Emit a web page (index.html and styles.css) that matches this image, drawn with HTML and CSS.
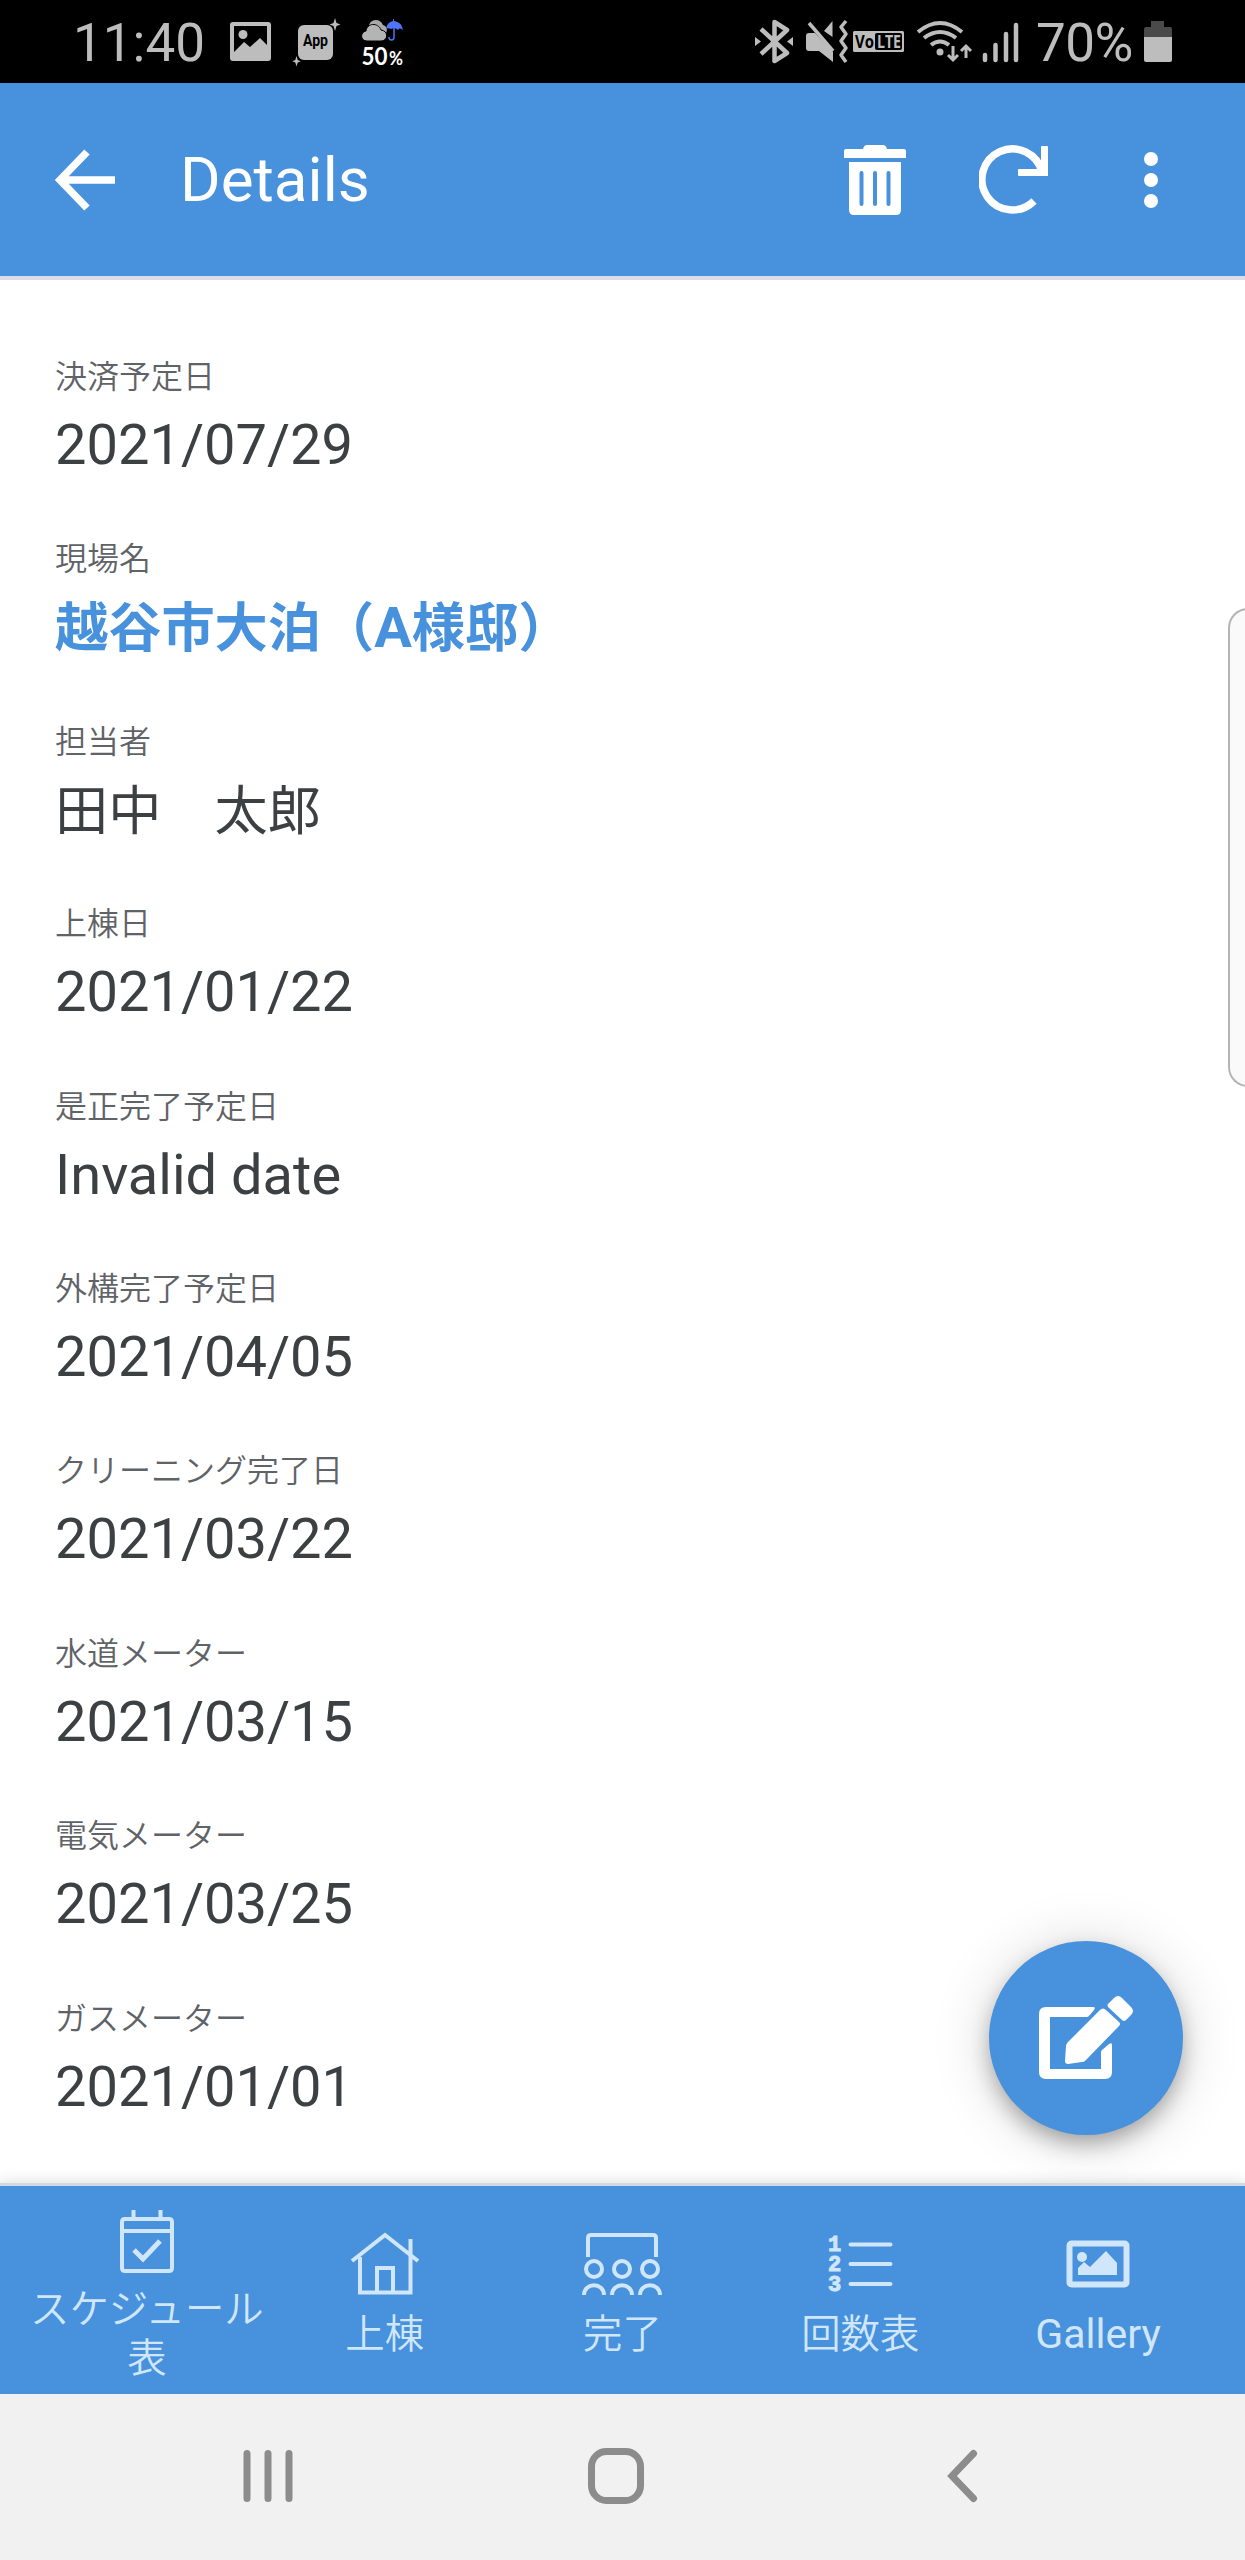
FILE: index.html
```html
<!DOCTYPE html>
<html lang="ja">
<head>
    <meta charset="UTF-8">
    <meta name="viewport" content="width=device-width, initial-scale=1.0">
    <title>Details</title>
    <link rel="stylesheet" href="styles.css">
</head>
<body>
    <div class="status-bar">
        <span class="clock">11:40</span>
        <svg class="status-left" width="180" height="83" viewBox="226 0 180 83">
            <!-- picture -->
            <path fill="#bdbdbd" fill-rule="evenodd" d="M233 22h35a3 3 0 0 1 3 3v33a3 3 0 0 1-3 3h-35a3 3 0 0 1-3-3V25a3 3 0 0 1 3-3zM234 26v26l10-10 6 5 10-9 7 7V26z"/>
            <circle cx="243" cy="34.500" r="4.500" fill="#bdbdbd"/>
            <!-- app -->
            <rect x="298" y="25" width="35" height="35" rx="6" fill="#bdbdbd"/>
            <text class="app-text" x="303" y="46" textLength="25" lengthAdjust="spacingAndGlyphs">App</text>
            <path fill="#bdbdbd" d="M335 18l1.500 5 4 1.500-4 1.500-1.500 5-1.500-5-4-1.500 4-1.500zM296.500 56l1.200 4 3 1.200-3 1.200-1.200 4-1.200-4-3-1.200 3-1.200z"/>
            <!-- weather -->
            <path fill="#a8a8a8" d="M369 25c2-6 11-7 14 0 5 1 5 8 1 10l-14-7z"/>
            <path fill="#b4b4b4" stroke="#000" stroke-width="1" d="M367 41c-7 0-7-9-1-10 1-8 12-9 15-1 8 1 7 11 0 11z"/>
            <path fill="#4f74f5" d="M386 29c1-5 3-7 7-8v-2h1v2c6 1 8 4 9 9-2-2-4-2-5 0-2-2-5-2-7-1-2-1-4-1-5 0z"/>
            <path fill="none" stroke="#4f74f5" stroke-width="1.500" d="M394 28v9c0 4-5 4-5 0"/>
            <text class="rain-text" x="361.500" y="64.500" textLength="26" lengthAdjust="spacingAndGlyphs">50</text>
            <text class="rain-percent" x="389" y="64.500" textLength="14" lengthAdjust="spacingAndGlyphs">%</text>
        </svg>
        <svg class="status-right" width="270" height="83" viewBox="752 0 270 83">
            <!-- bluetooth -->
            <path fill="none" stroke="#bdbdbd" stroke-width="4.500" stroke-linejoin="round" d="M761 29l26 24-12.500 8V22l12.500 8-26 24"/>
            <path fill="#bdbdbd" d="M755 37l6 4.500-6 4.500zM793 37l-6 4.500 6 4.500z"/>
            <!-- muted, vibrating -->
            <path fill="#bdbdbd" d="M806 36q0-3 3-3h6l18 19v10l-14-11h-10q-3 0-3-3zM824 31l8.500-10v16z"/>
            <path fill="none" stroke="#bdbdbd" stroke-width="3.500" d="M809 23l24 28"/>
            <path fill="none" stroke="#bdbdbd" stroke-width="3.500" stroke-linejoin="round" d="M846 21l-5 6 5 7-5 7 5 7-5 7 5 7"/>
            <!-- volte -->
            <rect x="853" y="31" width="51" height="21" rx="1.500" fill="#bdbdbd"/>
            <rect x="875" y="33" width="27" height="17" rx="2" fill="#000"/>
            <text class="volte-text" x="855" y="47.500" textLength="19" lengthAdjust="spacingAndGlyphs">Vo</text>
            <text class="volte-text light" x="877" y="47.500" textLength="24" lengthAdjust="spacingAndGlyphs">LTE</text>
            <!-- wifi -->
            <g fill="none" stroke="#bdbdbd" stroke-width="4">
                <path d="M918 32q22-18 44 0M924 38q16-12 32 0M931 45q9-7 18 0"/>
            </g>
            <circle cx="940" cy="52" r="3.500" fill="#bdbdbd"/>
            <path fill="none" stroke="#bdbdbd" stroke-width="3" d="M953 46v14M948 55l5 5 5-5M966 58V46M961 51l5-5 5 5"/>
            <!-- signal -->
            <path stroke="#bdbdbd" stroke-width="4.500" stroke-linecap="round" d="M985 55v5M995.500 45v15M1006 34v26M1016 25v35"/>
        </svg>
        <span class="battery-level">70%</span>
        <svg class="battery" width="28" height="41" viewBox="0 0 28 41">
            <path fill="#4a4a4a" d="M0 16V8q0-2 2-2h5V0h13v6h6q2 0 2 2v8z"/>
            <path fill="#bdbdbd" d="M0 16h28v23q0 2-2 2H2q-2 0-2-2z"/>
        </svg>
    </div>

    <header class="app-bar">
        <svg class="back" width="64" height="64" viewBox="0 0 64 64">
            <path d="M62 32H6M34 4L7 32l27 28"/>
        </svg>
        <h1>Details</h1>
        <div class="actions">
            <svg width="62" height="70" viewBox="0 0 62 70">
                <path fill="#fff" d="M0 6q0-2 2-2h17q1-4 4-4h16q3 0 4 4h17q2 0 2 2v7H0z"/>
                <path fill="#fff" fill-rule="evenodd" d="M5 17h52v48q0 5-5 5H10q-5 0-5-5zM15.500 28v31q0 2 2 2t2-2V28q0-2-2-2t-2 2zM29 28v31q0 2 2 2t2-2V28q0-2-2-2t-2 2zM42.500 28v31q0 2 2 2t2-2V28q0-2-2-2t-2 2z"/>
            </svg>
            <svg width="70" height="70" viewBox="0 0 70 70">
                <path fill="none" stroke="#fff" stroke-width="7.500" d="M55 56A30.500 30.500 0 1 1 63 27"/>
                <path fill="#fff" d="M62 2q0-1 1-1h5q1 0 1 1v29H40q-1 0-1-1v-5q0-1 1-1h22z"/>
            </svg>
            <svg width="14" height="56" viewBox="0 0 14 56">
                <g fill="#fff">
                    <circle cx="7" cy="7" r="7"/>
                    <circle cx="7" cy="28" r="7"/>
                    <circle cx="7" cy="49" r="7"/>
                </g>
            </svg>
        </div>
    </header>

    <main class="details">
        <div class="field">
            <div class="label">決済予定日</div>
            <div class="value">2021/07/29</div>
        </div>
        <div class="field">
            <div class="label">現場名</div>
            <div class="value ja title">越谷市大泊（<span class="latin">A</span>様邸）</div>
        </div>
        <div class="field">
            <div class="label">担当者</div>
            <div class="value ja">田中　太郎</div>
        </div>
        <div class="field">
            <div class="label">上棟日</div>
            <div class="value">2021/01/22</div>
        </div>
        <div class="field">
            <div class="label">是正完了予定日</div>
            <div class="value">Invalid date</div>
        </div>
        <div class="field">
            <div class="label">外構完了予定日</div>
            <div class="value">2021/04/05</div>
        </div>
        <div class="field">
            <div class="label">クリーニング完了日</div>
            <div class="value">2021/03/22</div>
        </div>
        <div class="field">
            <div class="label">水道メーター</div>
            <div class="value">2021/03/15</div>
        </div>
        <div class="field">
            <div class="label">電気メーター</div>
            <div class="value">2021/03/25</div>
        </div>
        <div class="field">
            <div class="label">ガスメーター</div>
            <div class="value">2021/01/01</div>
        </div>
        <div class="edge-handle"></div>
        <button class="fab">
            <svg width="96" height="84" viewBox="0 0 96 84">
                <path fill="#fff" d="M7 11h47q3 0 1 3l-5 6q-1 1-2 1H11v52h51V56q0-1 1-2l7-6q3-2 3 1v27q0 7-7 7H7q-7 0-7-7V18q0-7 7-7z"/>
                <path fill="#fff" d="M61 14q3-3 6 0l13 12q2 2 0 4L46 65q-1 1-3 1l-14 2q-3 0-3-3l1-15q0-2 2-4zM69 8l6-6q4-4 8 0l9 9q4 4 0 8l-5 5q-2 2-4 0L69 11q-1-2 0-3z"/>
            </svg>
        </button>
    </main>

    <nav class="tab-bar">
        <a class="tab">
            <svg width="80" height="69" viewBox="0 0 80 69">
                <path class="line" d="M18 15h44q3 0 3 3v46q0 3-3 3H18q-3 0-3-3V18q0-3 3-3zM15 27h50M26.500 15V6M53.500 15V6"/>
                <path class="line thick" d="M27 46l9 9 17-18"/>
            </svg>
            <span>スケジュール表</span>
        </a>
        <a class="tab">
            <svg width="80" height="69" viewBox="0 0 80 69">
                <path class="line" d="M7 32L40 6l33 26M15 28v35.500h50.500V10M32 63V39h16v24"/>
            </svg>
            <span>上棟</span>
        </a>
        <a class="tab">
            <svg width="80" height="69" viewBox="0 0 80 69">
                <path class="line" d="M6 28V9q0-3 3-3h62q3 0 3 3v19"/>
                <circle class="line" cx="12" cy="40" r="8"/>
                <circle class="line" cx="40" cy="40" r="8"/>
                <circle class="line" cx="68" cy="40" r="8"/>
                <path class="line" d="M2 66c0-13 20-13 20 0M30 66c0-13 20-13 20 0M58 66c0-13 20-13 20 0"/>
            </svg>
            <span>完了</span>
        </a>
        <a class="tab">
            <svg width="80" height="69" viewBox="0 0 80 69">
                <text class="list-number" x="14.500" y="22" text-anchor="middle">1</text>
                <text class="list-number" x="14.500" y="42" text-anchor="middle">2</text>
                <text class="list-number" x="14.500" y="62" text-anchor="middle">3</text>
                <path class="line" stroke-linecap="round" d="M30.500 15.500h40M30.500 35h40M30.500 55h40"/>
            </svg>
            <span>回数表</span>
        </a>
        <a class="tab latin">
            <svg width="80" height="69" viewBox="0 0 80 69">
                <rect class="line frame" x="11.500" y="14.500" width="57" height="41" rx="2"/>
                <path fill="#cfe6fb" d="M20 46v-7l6-6 6 5 16-16 11 12v12z"/>
                <circle cx="24" cy="28" r="5" fill="#cfe6fb"/>
            </svg>
            <span>Gallery</span>
        </a>
    </nav>

    <div class="system-nav">
        <svg width="56" height="60" viewBox="0 0 56 60">
            <path d="M7 7.500v45M28 7.500v45M49 7.500v45"/>
        </svg>
        <svg width="56" height="60" viewBox="0 0 56 60">
            <rect x="3.500" y="5.500" width="49" height="49" rx="15"/>
        </svg>
        <svg width="56" height="60" viewBox="0 0 56 60">
            <path d="M37.500 7.500L16 30l21.500 22.500"/>
        </svg>
    </div>
</body>
</html>
```

FILE: styles.css
```css
* {
    box-sizing: border-box;
}

body {
    margin: 0;
    width: 1245px;
    height: 2560px;
    display: flex;
    flex-direction: column;
    overflow: hidden;
    background-color: #fff;
    font-family: Roboto, "Noto Sans CJK JP", sans-serif;
}

svg {
    display: block;
    flex-shrink: 0;
}

.status-bar {
    display: flex;
    align-items: center;
    height: 83px;
    padding: 0 73px;
    background-color: #000;
    color: #bdbdbd;
    font-size: 53px;
    line-height: 83px;
}

.clock {
    width: 153px;
    padding-top: 3px;
}

.status-right {
    margin-left: 346px;
}

.battery-level {
    width: 108px;
    padding-top: 3px;
    padding-left: 14px;
    letter-spacing: -0.5px;
}

.battery {
    margin-left: 14px;
}

.app-text {
    font-size: 17px;
    font-weight: 700;
    fill: #000;
}

.rain-text {
    font-family: Lato, sans-serif;
    font-size: 24px;
    font-weight: 700;
    fill: #fff;
}

.rain-percent {
    font-family: Lato, sans-serif;
    font-size: 19px;
    font-weight: 700;
    fill: #fff;
}

.volte-text {
    font-family: "Open Sans", sans-serif;
    font-size: 17px;
    font-weight: 700;
    fill: #000;
}

.volte-text.light {
    fill: #bdbdbd;
}

.app-bar {
    display: flex;
    align-items: center;
    height: 197px;
    padding: 0 87px 0 53px;
    background-color: #4891dc;
    border-bottom: 4px solid #dadce8;
    color: #fff;
}

.back path {
    fill: none;
    stroke: #fff;
    stroke-width: 7.5;
}

.app-bar h1 {
    margin: 0 0 0 63px;
    padding-bottom: 1px;
    font-size: 62px;
    font-weight: 400;
}

.actions {
    display: flex;
    align-items: center;
    margin-left: auto;
}

.actions svg:nth-child(2) {
    margin: 0 95px 0 73px;
}

.details {
    position: relative;
    height: 1903px;
    padding: 66px 55px 0;
    color: #3c4043;
}

.field {
    height: 182.4px;
}

.label {
    height: 60px;
    padding-top: 1px;
    line-height: 60px;
    font-size: 32px;
    font-weight: 350;
    color: #5f6368;
}

.value {
    height: 80px;
    line-height: 79px;
    font-size: 56px;
}

.value.ja {
    padding-top: 1px;
    font-size: 53.2px;
    line-height: 80px;
}

.value.title {
    font-weight: 700;
    color: #4891dc;
}

.value .latin {
    font-size: 56px;
    line-height: 1;
}

.edge-handle {
    position: absolute;
    top: 328px;
    right: -4px;
    width: 21px;
    height: 479px;
    border: 2px solid #b4b4b4;
    border-right: none;
    border-radius: 20px 0 0 20px;
    background-color: #fafafa;
}

.fab {
    position: absolute;
    top: 1661px;
    right: 62px;
    display: flex;
    align-items: center;
    justify-content: center;
    width: 194px;
    height: 194px;
    padding: 0 0 0 2px;
    border: none;
    border-radius: 50%;
    background-color: #4891dc;
    box-shadow: 0 10px 22px -2px rgba(0, 0, 0, 0.32), 0 4px 60px rgba(0, 0, 0, 0.16);
}

.tab-bar {
    position: relative;
    display: flex;
    height: 211px;
    padding: 7px 28px 0;
    background-color: #4891dc;
    border-top: 3px solid #d3d8e2;
    box-shadow: 0 0 14px rgba(0, 0, 0, 0.16);
}

.tab {
    display: flex;
    flex-direction: column;
    align-items: center;
    justify-content: center;
    width: 238px;
    color: #cfe6fb;
    font-size: 39.4px;
    font-weight: 350;
    line-height: 49px;
    text-align: center;
}

.tab svg {
    margin-bottom: 12px;
}

.tab.latin {
    font-size: 41px;
    font-weight: 400;
}

.line {
    fill: none;
    stroke: #cfe6fb;
    stroke-width: 4;
}

.line.thick {
    stroke-width: 5;
}

.line.frame {
    stroke-width: 6;
}

.list-number {
    font-family: "Liberation Mono", monospace;
    font-size: 22px;
    font-weight: 700;
    fill: #cfe6fb;
    stroke: #cfe6fb;
}

.system-nav {
    position: relative;
    display: flex;
    align-items: center;
    gap: 292px;
    height: 166px;
    padding: 0 240px 2px;
    background-color: #f1f1f1;
}

.system-nav svg {
    fill: none;
    stroke: #8c8c8c;
    stroke-width: 7;
    stroke-linecap: round;
}
```
